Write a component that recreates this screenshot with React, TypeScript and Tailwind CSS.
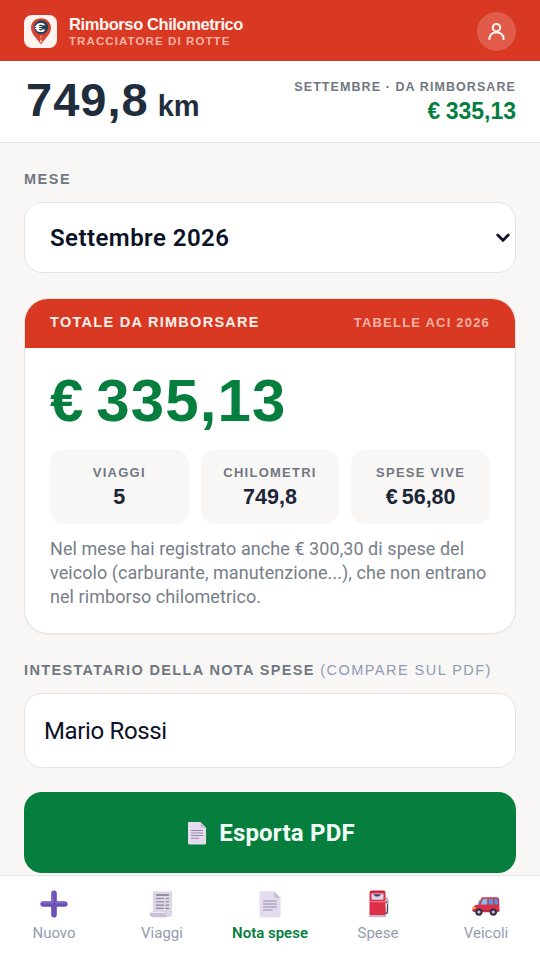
import { useState } from "react";
import type { ReactNode } from "react";
import { clsx } from "clsx";

const AppLogo = () => (
  <svg width="33" height="33" viewBox="0 0 33 33" className="shrink-0">
    <rect width="33" height="33" rx="8" fill="#fdf3ef" />
    <path
      d="M17 3.200c-5.800 0-10 4.200-10 9.700 0 6.200 6.400 10.600 10 16.700 3.600-6.100 10-10.500 10-16.700 0-5.500-4.200-9.700-10-9.700z"
      fill="#d64532"
    />
    <circle cx="17.300" cy="12.200" r="7" fill="#26415a" />
    <path d="M17 21v3.500" stroke="#f7cfc5" strokeWidth="1" strokeDasharray="1.600 1" />
    <circle cx="17" cy="26.300" r="1.100" fill="#fbe5df" />
    <text
      x="10.800"
      y="16.900"
      textLength="10.500"
      lengthAdjust="spacingAndGlyphs"
      fontSize="13.500"
      fontWeight="700"
      fill="#ffffff"
      className="font-['Liberation_Sans',sans-serif]"
    >
      €
    </text>
  </svg>
);

const UserIcon = () => (
  <svg width="19" height="19" viewBox="0 0 20 20" fill="none" stroke="#fff3ee" strokeWidth="2.200" strokeLinecap="round">
    <circle cx="10" cy="6" r="3.900" />
    <path d="M2.500 18c.2-4.500 3.300-7 7.500-7s7.300 2.500 7.500 7" />
  </svg>
);

const PlusIcon = () => (
  <svg width="28" height="28" viewBox="0 0 28 28">
    <path
      d="M14 3.200v21.600M3.200 14h21.600"
      stroke="#6d50b5"
      strokeWidth="5.600"
      strokeLinecap="round"
    />
    <path d="M12.900 2.500v10M3 12.800h9M16 12.800h9" stroke="#8266c6" strokeWidth="1.400" strokeLinecap="round" fill="none" />
  </svg>
);

const ReceiptIcon = () => (
  <svg width="28" height="28" viewBox="0 0 28 28">
    <path d="M5 1.500h19v23a2.500 2.500 0 0 1-2.500 2.500H7.500L5 22z" fill="#ddd6e6" />
    <path d="M3.700 21.500h14.500c-1 1.500-.8 4 .6 5.700H5.200c-3.800 0-4.700-4.200-1.500-5.700z" fill="#c9bfd6" />
    <path d="M3.500 22.300h13.100" stroke="#eee9f4" strokeWidth="1.200" strokeLinecap="round" />
    <path d="M8.200 5h12.600" stroke="#6f637c" strokeWidth="1.300" />
    <path
      d="M8 8.500h8M17.500 8.500h3.500M8 11.800h8M17.500 11.800h3.500M8 15.100h8M17.500 15.100h3.500M8 18.400h8M17.500 18.400h3.500"
      stroke="#918599"
      strokeWidth="1.100"
    />
  </svg>
);

const DocumentIcon = ({ className = "size-7" }: { className?: string }) => (
  <svg viewBox="0 0 28 28" className={className}>
    <path d="M3.500 2.500a1.300 1.300 0 0 1 1.300-1.300H18l6.600 6.800v18a1.300 1.300 0 0 1-1.300 1.300H4.800a1.300 1.300 0 0 1-1.300-1.300z" fill="#e4dcee" />
    <path d="M18 1.200v5.300c0 .9.600 1.500 1.500 1.500h5.100z" fill="#c9bdd9" />
    <path d="M7.500 11h13M7.500 14h13M7.500 17h13M7.500 20h8.500" stroke="#998aa8" strokeWidth="1.200" strokeLinecap="round" />
  </svg>
);

const FuelIcon = () => (
  <svg width="28" height="28" viewBox="0 0 28 28">
    <path d="M21.500 13l2-2v10.300c0 3-2.700 2.900-2.700 0v-4" fill="none" stroke="#4e4658" strokeWidth="1.400" />
    <path d="M21.700 6.500l1.900 1.200 1 3.500v3h-1.900V11l-1-1.300z" fill="#bcb4c4" />
    <path d="M5.500 2.700A2.200 2.200 0 0 1 7.700.500h11.600a2.200 2.200 0 0 1 2.200 2.200v22.800h-16z" fill="#dd2f48" />
    <path d="M5.500 11.700h16" stroke="#f78095" strokeWidth="1.100" />
    <path d="M6.500 1.500h14" stroke="#a91f3f" strokeWidth="1" />
    <rect x="7.500" y="3.500" width="12" height="6.300" rx=".8" fill="#ddd4e7" />
    <path d="M9 4.200h8.500l-3 2.300h-2.800z" fill="#463a59" />
    <rect x="4.700" y="25.200" width="17.600" height="2" rx=".7" fill="#c5b9d1" />
  </svg>
);

const CarIcon = () => (
  <svg width="28" height="28" viewBox="0 0 28 28">
    <path
      d="M11.200 7.200h13.600c1.500 0 2.200.8 2.300 2.300l.4 10.100c0 1.700-.7 2.600-2.200 2.600H3.400C1.500 22.200.500 21.200.500 19.500c0-3 1.700-4.400 6.500-5l2-5.600c.5-1.200 1-1.700 2.200-1.700z"
      fill="#dc3048"
    />
    <path d="M12 8.700h3.200v5.700H8.800l1.800-4.700c.3-.7.700-1 1.400-1z" fill="#78c7f3" />
    <path d="M16.800 8.700H21v5.700h-4.200zM22.500 8.700h1.900c.7 0 1 .4 1.100 1l.4 4.700h-3.400z" fill="#4c9be5" />
    <path d="M8.200 10.300L6.600 14.500" stroke="#5675c5" strokeWidth="1.300" />
    <path d="M.800 16.800h2.700v2.300H.500z" fill="#ffb442" />
    <path d="M.500 20.800h27" stroke="#8f294c" strokeWidth="1" />
    <circle cx="6.900" cy="22" r="3.700" fill="#392e49" />
    <circle cx="21.300" cy="22" r="3.700" fill="#392e49" />
    <circle cx="6.900" cy="22" r="1.600" fill="#cbc2d5" />
    <circle cx="21.300" cy="22" r="1.600" fill="#cbc2d5" />
  </svg>
);

const Stat = ({ label, value }: { label: string; value: ReactNode }) => (
  <div className="flex h-[74px] flex-col items-center rounded-[14px] bg-[#f8f7f6] pt-[14px] font-['Liberation_Sans',sans-serif] font-bold">
    <span className="text-[13px] leading-[18px] tracking-[1.250px] text-[#717781]">{label}</span>
    <span className="text-[21.500px] leading-[31px] [word-spacing:-2px] text-[#1b2637]">{value}</span>
  </div>
);

const tabs = [
  { name: "Nuovo", icon: <PlusIcon /> },
  { name: "Viaggi", icon: <ReceiptIcon /> },
  { name: "Nota spese", icon: <DocumentIcon /> },
  { name: "Spese", icon: <FuelIcon /> },
  { name: "Veicoli", icon: <CarIcon /> },
];

export default function App() {
  const [tab, setTab] = useState("Nota spese");

  return (
    <div className="flex h-[960px] w-[540px] flex-col overflow-hidden bg-[#f8f7f5] font-['Roboto',sans-serif]">
      <header className="flex h-[61px] shrink-0 items-center bg-[#d93823] px-6 pt-[2px]">
        <AppLogo />
        <div className="ml-3 flex-1 font-['Liberation_Sans',sans-serif] font-bold">
          <h1 className="text-[16.500px] leading-[19px] tracking-[-0.4px] text-[#fff5f1]">Rimborso Chilometrico</h1>
          <p className="text-[11.500px] leading-[14px] tracking-[1.1px] text-[#f7b3a4]">TRACCIATORE DI ROTTE</p>
        </div>
        <button className="flex size-[39px] items-center justify-center rounded-full bg-white/18">
          <UserIcon />
        </button>
      </header>

      <section className="flex h-[82px] shrink-0 items-center justify-between border-b border-[#e5e4e2] bg-white px-6 font-['Liberation_Sans',sans-serif] font-bold">
        <p className="flex items-baseline gap-[9px] pb-[2px] pl-[2px] text-[#1f2d3d]">
          <span className="text-[47px] leading-[54px] tracking-[1px]">749,8</span>
          <span className="text-[29px]">km</span>
        </p>
        <div className="pt-[1px] text-right">
          <p className="text-[12.500px] leading-[18px] tracking-[1.080px] text-[#717781]">SETTEMBRE · DA RIMBORSARE</p>
          <p className="text-[23px] leading-[30px] [word-spacing:-1px] text-[#067f3e]">€ 335,13</p>
        </div>
      </section>

      <main className="flex min-h-0 flex-1 flex-col overflow-hidden px-6">
        <label className="mt-[27px] font-['Liberation_Sans',sans-serif] text-[14.500px] leading-[18px] font-bold tracking-[1.500px] text-[#717781]">
          MESE
        </label>
        <button className="mt-[14px] flex h-[71px] shrink-0 items-center justify-between rounded-[18px] border border-[#e5e4e2] bg-white pr-[5px] pl-[25px]">
          <span className="text-[24px] font-semibold tracking-[0.450px] text-[#0b1226]">Settembre 2026</span>
          <svg width="14" height="10" viewBox="0 0 14 10" fill="none">
            <path d="M1.700 2l5.300 5.300L12.300 2" stroke="#0b1226" strokeWidth="2.700" strokeLinecap="round" />
          </svg>
        </button>

        <section className="mt-[25px] h-[336px] shrink-0 overflow-hidden rounded-[24px] border border-[#e5e4e2] bg-white shadow-[0_1px_2px_rgba(0,0,0,0.04)]">
          <div className="flex h-[49px] items-center justify-between bg-[#d93823] px-[25px] pb-[2px] font-['Liberation_Sans',sans-serif] font-bold">
            <h2 className="text-[14.500px] tracking-[1.280px] text-[#fff0eb]">TOTALE DA RIMBORSARE</h2>
            <span className="text-[13px] tracking-[1.200px] text-[#f7b3a4]">TABELLE ACI 2026</span>
          </div>
          <div className="px-[25px] pt-[20px]">
            <p className="font-['Liberation_Sans',sans-serif] text-[60px] leading-[66px] font-bold tracking-[1.100px] [word-spacing:-6px] text-[#067f3e]">
              € 335,13
            </p>
            <div className="mt-[16px] grid grid-cols-3 gap-3">
              <Stat label="VIAGGI" value="5" />
              <Stat label="CHILOMETRI" value="749,8" />
              <Stat label="SPESE VIVE" value="€ 56,80" />
            </div>
            <p className="mt-[13px] text-[18px] leading-6 tracking-[0.060px] whitespace-nowrap text-[#787e88]">
              Nel mese hai registrato anche € 300,30 di spese del
              <br />
              veicolo (carburante, manutenzione...), che non entrano
              <br />
              nel rimborso chilometrico.
            </p>
          </div>
        </section>

        <p className="mt-[27px] font-['Liberation_Sans',sans-serif] text-[14.500px] leading-[18px] font-bold tracking-[1.350px] whitespace-nowrap text-[#717781]">
          INTESTATARIO DELLA NOTA SPESE <span className="font-normal tracking-[1.480px] text-[#8e9bb5]">(COMPARE SUL PDF)</span>
        </p>
        <div className="mt-[14px] flex h-[75px] shrink-0 items-center rounded-[18px] border border-[#e5e4e2] bg-white px-[19px] pt-[1px] text-[24px] tracking-[-0.350px] text-[#0b1226]">
          Mario Rossi
        </div>

        <button className="mt-6 flex h-[81px] shrink-0 items-center justify-center gap-[10px] rounded-[18px] bg-[#067f3e] pt-[1px] text-[24px] font-bold tracking-[0.200px] text-[#f2fff6]">
          <DocumentIcon className="size-6" />
          Esporta PDF
        </button>
      </main>

      <nav className="grid h-[85px] shrink-0 grid-cols-5 border-t border-[#e5e4e2] bg-white">
        {tabs.map(({ name, icon }) => (
          <button
            key={name}
            onClick={() => setTab(name)}
            className={clsx(
              "flex flex-col items-center gap-[4px] pt-[14px] text-[15px] leading-[22px]",
              tab === name ? "font-semibold text-[#067f3e]" : "text-[#929cb0]"
            )}
          >
            {icon}
            {name}
          </button>
        ))}
      </nav>
    </div>
  );
}
